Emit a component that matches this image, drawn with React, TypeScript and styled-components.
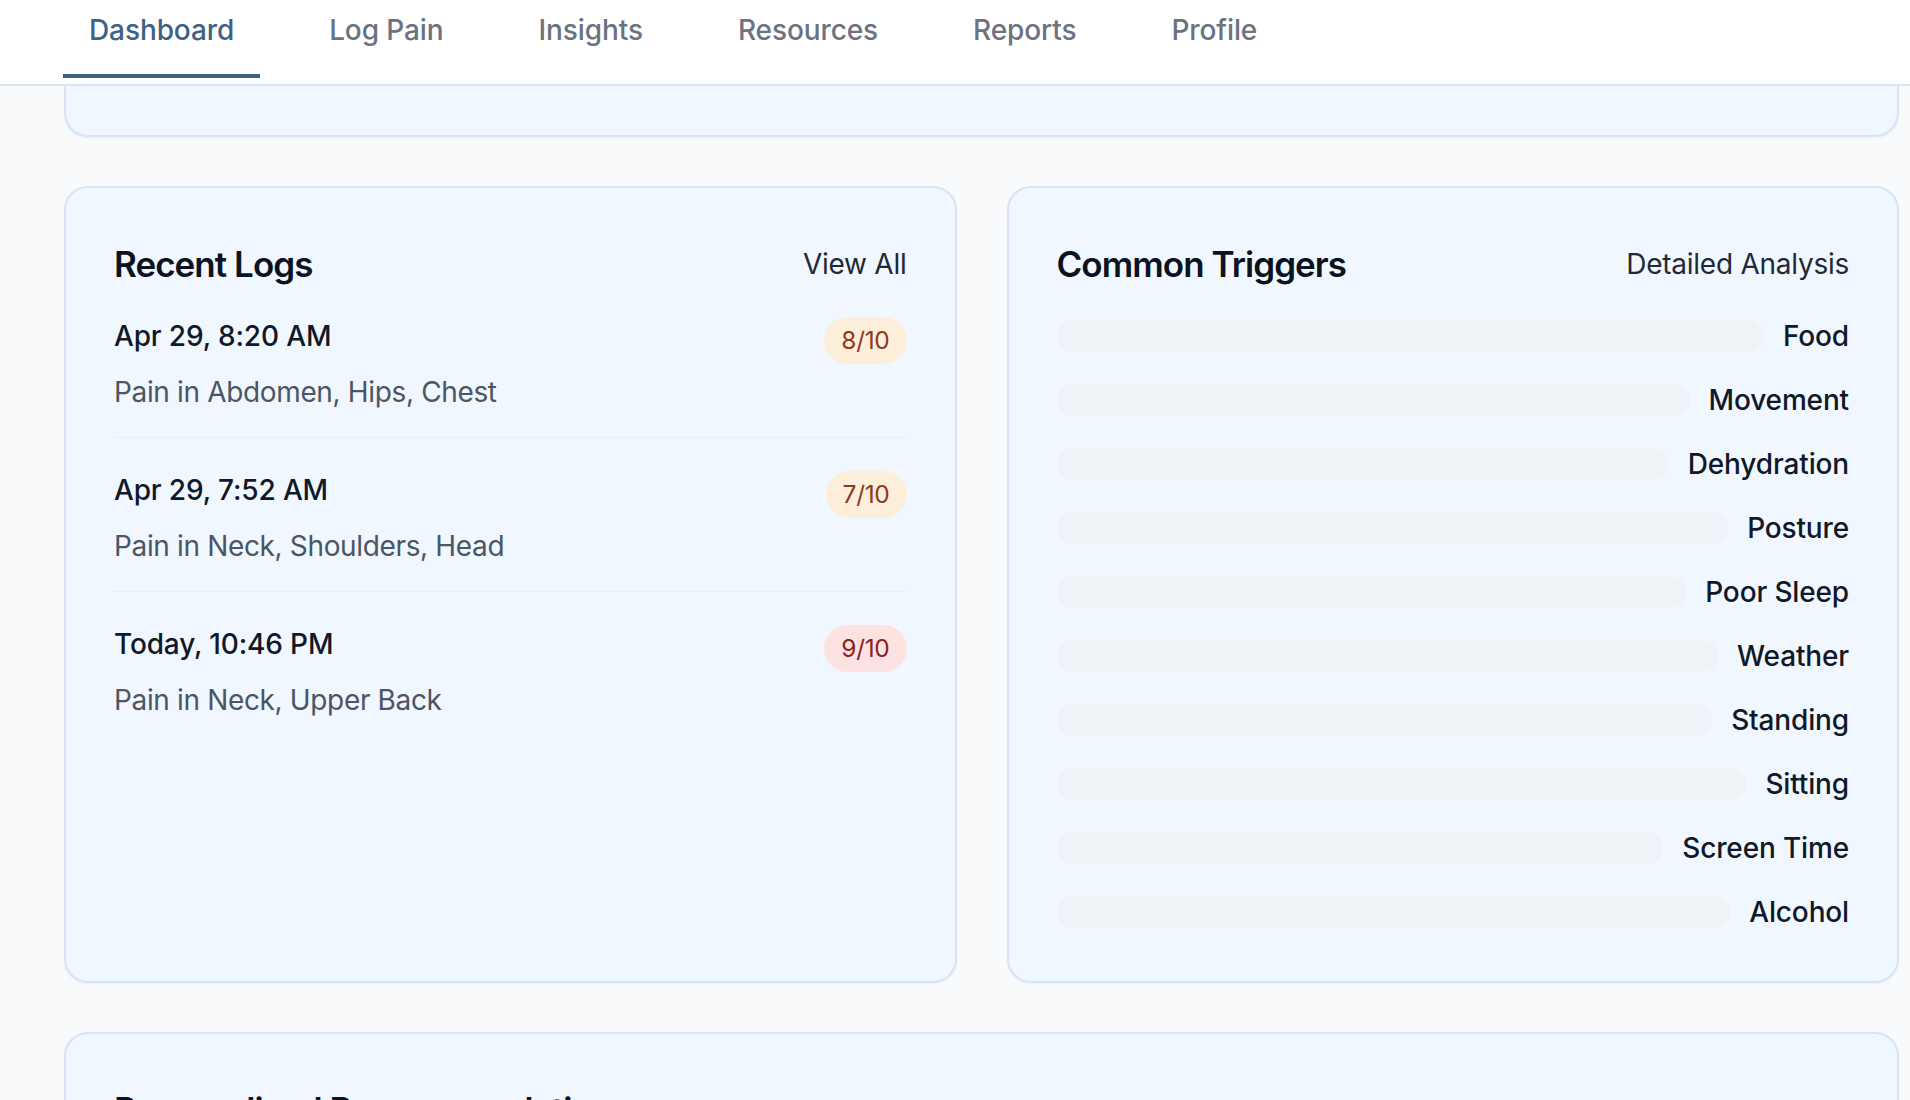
import React from "react";
import styled, { createGlobalStyle } from "styled-components";

const GlobalStyle = createGlobalStyle`
  html, body {
    margin: 0;
    padding: 0;
    overflow: hidden;
    background: #f8fafc;
    font-family: Inter, "Noto Sans", "Liberation Sans", sans-serif;
    -webkit-font-smoothing: antialiased;
  }
  * { box-sizing: border-box; }
`;

const Page = styled.div`
  min-height: 100vh;
  background: #f8fafc;
`;

const Nav = styled.nav`
  height: 86px;
  background: #ffffff;
  border-bottom: 2px solid #d6e6f6;
  display: flex;
  align-items: flex-start;
  padding-left: 63px;
  gap: 43px;
`;

const Tab = styled.a<{ $active?: boolean }>`
  display: block;
  padding: 9px 26px 23px;
  font-size: 28px;
  line-height: 42px;
  font-weight: 500;
  letter-spacing: -0.1px;
  color: ${(p) => (p.$active ? "#3d6286" : "#6b7280")};
  border-bottom: 4px solid ${(p) => (p.$active ? "#3d6286" : "transparent")};
  text-decoration: none;
  cursor: pointer;
`;

const Main = styled.main`
  display: flex;
  flex-direction: column;
  gap: 49px;
  padding: 0 11px 0 64px;
`;

const Card = styled.section`
  background: #f0f7ff;
  border: 2px solid #d3e5f7;
  border-radius: 24px;
  box-shadow: 0 1px 2px rgba(30, 64, 110, 0.06);
  padding: 48px;
`;

const TopCardTail = styled(Card)`
  height: 51px;
  padding: 0;
  border-top: none;
  border-top-left-radius: 0;
  border-top-right-radius: 0;
`;

const Grid = styled.div`
  display: grid;
  grid-template-columns: 1fr 1fr;
  gap: 50px;
`;

const CardHeader = styled.div`
  display: flex;
  align-items: center;
  justify-content: space-between;
  margin-bottom: 23px;
`;

const Title = styled.h2`
  margin: 0;
  font-size: 35px;
  line-height: 56px;
  font-weight: 600;
  color: #0b1220;
  letter-spacing: -0.95px;
`;

const HeaderLink = styled.a`
  font-size: 28px;
  line-height: 42px;
  font-weight: 400;
  letter-spacing: -0.25px;
  color: #1f2937;
  cursor: pointer;
`;

const LogList = styled.div`
  display: flex;
  flex-direction: column;
  gap: 31px;
`;

const LogItem = styled.div<{ $last?: boolean }>`
  display: flex;
  justify-content: space-between;
  align-items: flex-start;
  padding-bottom: ${(p) => (p.$last ? "0" : "24px")};
  border-bottom: ${(p) => (p.$last ? "none" : "1px solid #e6eef7")};
`;

const LogText = styled.div`
  display: flex;
  flex-direction: column;
  gap: 14px;
`;

const LogDate = styled.div`
  font-size: 28px;
  line-height: 42px;
  font-weight: 500;
  letter-spacing: -0.15px;
  color: #111827;
`;

const LogAreas = styled.div`
  font-size: 28px;
  line-height: 42px;
  font-weight: 400;
  letter-spacing: -0.35px;
  color: #4b5563;
`;

const Badge = styled.span<{ $tone: "orange" | "red" }>`
  display: inline-block;
  margin-top: 2px;
  padding: 6px 17px;
  border-radius: 999px;
  font-size: 24.5px;
  line-height: 35px;
  font-weight: 400;
  letter-spacing: -0.3px;
  background: ${(p) => (p.$tone === "red" ? "#fde2e2" : "#fdeed9")};
  color: ${(p) => (p.$tone === "red" ? "#8f1d22" : "#8c3a1c")};
`;

const TriggerList = styled.div`
  display: flex;
  flex-direction: column;
  gap: 22px;
`;

const TriggerRow = styled.div`
  display: flex;
  align-items: center;
  gap: 19px;
`;

const Track = styled.div`
  flex: 1;
  height: 32px;
  border-radius: 16px;
  background: #eef3f8;
  overflow: hidden;
`;

const TriggerLabel = styled.span`
  font-size: 28px;
  line-height: 42px;
  font-weight: 500;
  letter-spacing: -0.15px;
  color: #111827;
  white-space: nowrap;
`;

const tabs = ["Dashboard", "Log Pain", "Insights", "Resources", "Reports", "Profile"];

const logs: { date: string; areas: string; score: string; tone: "orange" | "red" }[] = [
  { date: "Apr 29, 8:20 AM", areas: "Pain in Abdomen, Hips, Chest", score: "8/10", tone: "orange" },
  { date: "Apr 29, 7:52 AM", areas: "Pain in Neck, Shoulders, Head", score: "7/10", tone: "orange" },
  { date: "Today, 10:46 PM", areas: "Pain in Neck, Upper Back", score: "9/10", tone: "red" },
];

const triggers = [
  "Food",
  "Movement",
  "Dehydration",
  "Posture",
  "Poor Sleep",
  "Weather",
  "Standing",
  "Sitting",
  "Screen Time",
  "Alcohol",
];

export default function App() {
  return (
    <Page>
      <GlobalStyle />
      <Nav>
        {tabs.map((t, i) => (
          <Tab key={t} $active={i === 0}>
            {t}
          </Tab>
        ))}
      </Nav>
      <Main>
        <TopCardTail />
        <Grid>
          <Card>
            <CardHeader>
              <Title>Recent Logs</Title>
              <HeaderLink>View All</HeaderLink>
            </CardHeader>
            <LogList>
              {logs.map((l, i) => (
                <LogItem key={l.date} $last={i === logs.length - 1}>
                  <LogText>
                    <LogDate>{l.date}</LogDate>
                    <LogAreas>{l.areas}</LogAreas>
                  </LogText>
                  <Badge $tone={l.tone}>{l.score}</Badge>
                </LogItem>
              ))}
            </LogList>
          </Card>
          <Card>
            <CardHeader>
              <Title>Common Triggers</Title>
              <HeaderLink>Detailed Analysis</HeaderLink>
            </CardHeader>
            <TriggerList>
              {triggers.map((t) => (
                <TriggerRow key={t}>
                  <Track />
                  <TriggerLabel>{t}</TriggerLabel>
                </TriggerRow>
              ))}
            </TriggerList>
          </Card>
        </Grid>
        <Card>
          <CardHeader>
            <Title>Personalized Recommendations</Title>
          </CardHeader>
          <LogAreas>Based on your recent logs and triggers.</LogAreas>
        </Card>
      </Main>
    </Page>
  );
}
